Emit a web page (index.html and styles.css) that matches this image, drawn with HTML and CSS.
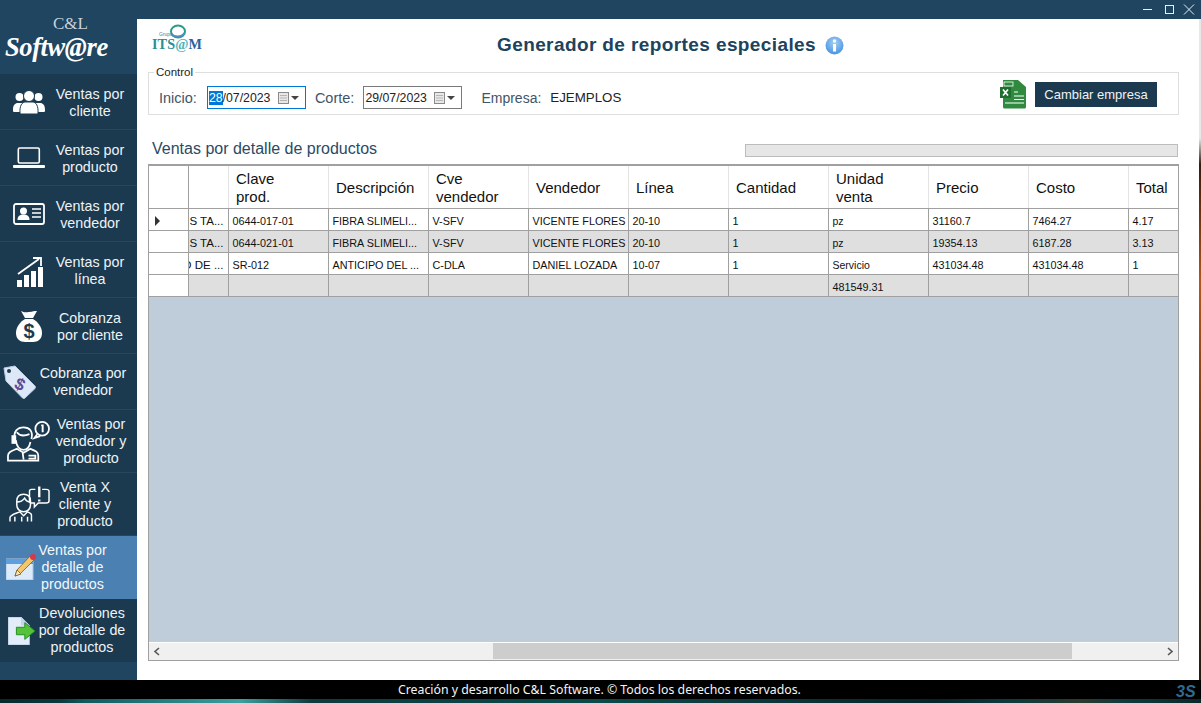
FILE: index.html
```html
<!DOCTYPE html>
<html lang="es">
<head>
<meta charset="utf-8">
<title>Generador de reportes especiales</title>
<link rel="stylesheet" href="styles.css">
</head>
<body>
<div class="window">
  <div class="titlebar">
    <svg class="winctl" width="60" height="14" viewBox="0 0 60 14" fill="none" stroke="#e8eef3" stroke-width="1">
      <path d="M3 6.500h9"/><rect x="25.500" y="2.500" width="8" height="8"/><path d="M44 1.500l10 10M54 1.500l-10 10"/>
    </svg>
  </div>
  <div class="middle">
    <nav class="sidebar">
      <div class="brand">
        <span class="brand-top">C&amp;L</span>
        <span class="brand-main">Softw@re</span>
      </div>
      <a class="item item-a">
        <span class="icon"><svg width="32" height="24" viewBox="0 0 32 24" fill="#fff"><circle cx="6.500" cy="7" r="4"/><circle cx="25.500" cy="7" r="4"/><path d="M0 20c0-5 2-7 5-7h4v9H1.500A1.500 1.500 0 0 1 0 20zM32 20c0-5-2-7-5-7h-4v9h7.500a1.500 1.500 0 0 0 1.500-2z"/><circle cx="16" cy="6" r="5.500" stroke="#1b3a50"/><path d="M7 23c-.500-7 2-11 5-11h8c3 0 5.500 4 5 11a1 1 0 0 1-1 1H8a1 1 0 0 1-1-1z" stroke="#1b3a50"/></svg></span>
        <span class="label">Ventas por cliente</span>
      </a>
      <a class="item item-a">
        <span class="icon"><svg width="32" height="22" viewBox="0 0 32 22" fill="none" stroke="#fff" stroke-width="1.600"><rect x="5.300" y="1" width="21" height="15" rx="1.500"/><path d="M1 19.500h30" stroke-width="2.800" stroke-linecap="round"/></svg></span>
        <span class="label">Ventas por producto</span>
      </a>
      <a class="item item-a">
        <span class="icon"><svg width="32" height="24" viewBox="0 0 32 24"><rect x="1" y="2" width="30" height="20" rx="2" fill="none" stroke="#fff" stroke-width="1.800"/><circle cx="10.500" cy="9" r="3.500" fill="#fff"/><path d="M4.500 18c0-4 2.500-5.500 6-5.500s6 1.500 6 5.500z" fill="#fff"/><path d="M19 7h9M19 11h9M19 15h9" stroke="#fff" stroke-width="1.500"/></svg></span>
        <span class="label">Ventas por vendedor</span>
      </a>
      <a class="item item-a">
        <span class="icon"><svg width="30" height="35" viewBox="-4 -5 30 35" fill="#fff"><rect x="0" y="23" width="5" height="7"/><rect x="7" y="18" width="5" height="12"/><rect x="14" y="14" width="5" height="16"/><rect x="21" y="10" width="5" height="20"/><path d="M1 17L22 2" stroke="#fff" stroke-width="1.800" fill="none"/><path d="M16 1h8v8" fill="none" stroke="#fff" stroke-width="1.800"/></svg></span>
        <span class="label">Ventas por línea</span>
      </a>
      <a class="item item-a">
        <span class="icon"><svg width="29" height="33" viewBox="-3 -2 29 33"><path d="M5 0c3 1.500 4 1.500 8 1s5-1 8-1l-4 7H9z" fill="#fff"/><path d="M9 8h8c5 3 9 8 9 14 0 6-4 9-9 9H9c-5 0-9-3-9-9 0-6 4-11 9-14z" fill="#fff"/><text x="13" y="27" class="bag-sign">$</text></svg></span>
        <span class="label">Cobranza por cliente</span>
      </a>
      <a class="item item-b">
        <span class="icon"><svg width="33" height="34" viewBox="0 0 33 34"><path d="M1 3l11-2 20 20a2 2 0 0 1 0 2.500L22 33a2 2 0 0 1-2.500 0L3 16z" fill="#dce8f7" stroke="#b9cde6"/><circle cx="6" cy="6" r="2" fill="#1b3a50"/><text x="17" y="25" class="tag-sign" transform="rotate(25 17 19)">$</text></svg></span>
        <span class="label">Cobranza por vendedor</span>
      </a>
      <a class="item item-c">
        <span class="icon"><svg width="44" height="42" viewBox="0 0 44 42" fill="none" stroke="#fff" stroke-width="1.800"><path d="M8 20c-2-9 3-13 9-13s10 4 8 12"/><path d="M10 12c3 4 8 4 13 2"/><path d="M9 20c1 7 4 10 8 10s6-3 7-8"/><rect x="5.500" y="16" width="3" height="7" fill="#fff"/><path d="M1 41v-5c0-4 4-5 9-7l7 4 7-4c5 2 8 3 8 7v5z"/><path d="M16 33l1 7M22 36h7v3h-7"/><circle cx="36" cy="8.500" r="7"/><path d="M31 14l-3 4 6-2"/><path d="M35 5h1.500v7" stroke-width="2"/></svg></span>
        <span class="label">Ventas por vendedor y producto</span>
      </a>
      <a class="item item-d">
        <span class="icon"><svg width="42" height="37" viewBox="0 0 42 37" fill="none" stroke="#fff" stroke-width="1.500"><path d="M8 15c0-5 3-7 7-7s7 2 7 7v4c0 4-3 7-7 7s-7-3-7-7z"/><path d="M8 16c3 0 6-1 8-4 1 2 3 4 6 4"/><path d="M1 36v-4c0-3 5-4 10-6l4 4 4-4c5 2 4 3 4 6v4"/><path d="M6 36v-5M19 36v-5M13 31v5"/><path d="M27 3h-4c-2 0-2 1-2 2v10c0 1 0 2 2 2h3v4l4-4h8c2 0 3-1 3-2V5c0-1-1-2-3-2h-4"/><path d="M31 0v11M31 13.500v2" stroke-width="2.400"/></svg></span>
        <span class="label">Venta X cliente y producto</span>
      </a>
      <a class="item item-e active">
        <span class="icon"><svg class="pad" width="30" height="27" viewBox="0 0 30 27"><rect x="0" y="6" width="27" height="21" fill="#dceafa" stroke="#a9c5e6"/><rect x="0" y="6" width="27" height="5" fill="#5f9fe0"/><path d="M9 23l2-6L24 3l4 4-14 14z" fill="#f4c869" stroke="#7a5a2a" stroke-width=".8"/><path d="M9 23l2-6 4 4z" fill="#f8e6c0" stroke="#7a5a2a" stroke-width=".8"/><circle cx="27" cy="4" r="3" fill="#d8384a"/></svg></span>
        <span class="label">Ventas por detalle de productos</span>
      </a>
      <a class="item item-f">
        <span class="icon"><svg width="28" height="28" viewBox="0 0 30 30"><path d="M0 0h14l9 9v21H0z" fill="#e3edfa" stroke="#a6bfdc"/><path d="M14 0v9h9z" fill="#c3d6ee"/><path d="M9 11h9V6l11 9-11 9v-5H9z" fill="#55c23a" stroke="#1f8a1e"/></svg></span>
        <span class="label">Devoluciones por detalle de productos</span>
      </a>
    </nav>
    <main class="content">
      <header class="head">
        <div class="org">
          <svg class="org-ring" width="18" height="15" viewBox="0 0 18 15" fill="none"><ellipse cx="9" cy="7.500" rx="7" ry="6" stroke="#2f9a8c" stroke-width="2"/><path d="M2.500 10c2 3 10 4 13-1" stroke="#4a8fc0" stroke-width="2"/></svg>
          <span class="org-group">Grupo</span>
          <span class="org-name"><span class="org-t">ITS</span><span class="org-at">@</span><span class="org-m">M</span></span>
        </div>
        <h1 class="title">Generador de reportes especiales</h1>
        <svg class="info" width="19" height="19" viewBox="0 0 19 19"><defs><radialGradient id="ig" cx=".5" cy=".35" r=".7"><stop offset="0" stop-color="#a8d0f5"/><stop offset="1" stop-color="#3f8ee0"/></radialGradient></defs><circle cx="9.500" cy="9.500" r="9" fill="url(#ig)"/><circle cx="9.500" cy="5" r="1.700" fill="#fff"/><rect x="8" y="8" width="3" height="7.500" fill="#fff"/></svg>
      </header>
      <fieldset class="control">
        <legend class="legend">Control</legend>
        <span class="field-label">Inicio:</span>
        <span class="date date-focus"><span class="date-text"><span class="sel">28</span>/07/2023</span><span class="cal"><svg width="24" height="14" viewBox="0 0 24 14"><rect x=".5" y="1.500" width="10" height="11" fill="#e8e8e8" stroke="#8a8a8a"/><path d="M2 4.500h7M2 7h7M2 9.500h7" stroke="#b5b5b5"/><path d="M13 5h8l-4 4z" fill="#444"/></svg></span></span>
        <span class="field-label corte">Corte:</span>
        <span class="date"><span class="date-text">29/07/2023</span><span class="cal"><svg width="24" height="14" viewBox="0 0 24 14"><rect x=".5" y="1.500" width="10" height="11" fill="#e8e8e8" stroke="#8a8a8a"/><path d="M2 4.500h7M2 7h7M2 9.500h7" stroke="#b5b5b5"/><path d="M13 5h8l-4 4z" fill="#444"/></svg></span></span>
        <span class="field-label empresa">Empresa:</span>
        <span class="empresa-value">EJEMPLOS</span>
        <svg class="excel" width="27" height="30" viewBox="0 0 27 30"><path d="M3 1h15l8 7v20a1.500 1.500 0 0 1-1.500 1.500H4.500A1.500 1.500 0 0 1 3 28z" fill="#2f8a3f"/><rect x="4" y="3" width="9" height="4" fill="#2f8a3f" stroke="#fff" stroke-width=".8"/><rect x="0" y="8" width="11" height="11" fill="#1f6e30"/><path d="M3 10.500l5 6M8 10.500l-5 6" stroke="#fff" stroke-width="1.700"/><path d="M14 13h4M14 17h10M14 20.500h10M5 24h19" stroke="#fff" stroke-width="1.100"/></svg>
        <button class="change" type="button">Cambiar empresa</button>
      </fieldset>
      <div class="section">
        <h2 class="section-title">Ventas por detalle de productos</h2>
        <div class="progress"></div>
      </div>
      <div class="grid-box">
        <table class="grid">
          <colgroup><col class="c-head"><col class="c-1"><col class="c-n"><col class="c-n"><col class="c-n"><col class="c-n"><col class="c-n"><col class="c-n"><col class="c-n"><col class="c-n"><col class="c-n"><col class="c-t"></colgroup>
          <thead>
            <tr><th class="rowhead"></th><th></th><th>Clave<br>prod.</th><th>Descripción</th><th>Cve<br>vendedor</th><th>Vendedor</th><th>Línea</th><th>Cantidad</th><th>Unidad<br>venta</th><th>Precio</th><th>Costo</th><th>Total</th></tr>
          </thead>
          <tbody>
            <tr><td class="rowhead"><span class="arrow"></span></td><td class="clip"><span>S TA...</span></td><td>0644-017-01</td><td>FIBRA SLIMELI...</td><td>V-SFV</td><td>VICENTE FLORES</td><td>20-10</td><td>1</td><td class="small">pz</td><td>31160.7</td><td>7464.27</td><td>4.17</td></tr>
            <tr class="alt"><td class="rowhead"></td><td class="clip"><span>S TA...</span></td><td>0644-021-01</td><td>FIBRA SLIMELI...</td><td>V-SFV</td><td>VICENTE FLORES</td><td>20-10</td><td>1</td><td class="small">pz</td><td>19354.13</td><td>6187.28</td><td>3.13</td></tr>
            <tr><td class="rowhead"></td><td class="clip"><span>O DE ...</span></td><td>SR-012</td><td>ANTICIPO DEL ...</td><td>C-DLA</td><td>DANIEL LOZADA</td><td>10-07</td><td>1</td><td class="small">Servicio</td><td>431034.48</td><td>431034.48</td><td>1</td></tr>
            <tr class="alt"><td class="rowhead"></td><td></td><td></td><td></td><td></td><td></td><td></td><td></td><td>481549.31</td><td></td><td></td><td></td></tr>
          </tbody>
        </table>
        <div class="grid-empty"></div>
        <div class="hscroll">
          <svg width="7" height="9" viewBox="0 0 7 9" fill="none" stroke="#555" stroke-width="1.600"><path d="M6 1L2 4.500 6 8"/></svg>
          <div class="track"><div class="thumb"></div></div>
          <svg width="7" height="9" viewBox="0 0 7 9" fill="none" stroke="#555" stroke-width="1.600"><path d="M1 1l4 3.500L1 8"/></svg>
        </div>
      </div>
    </main>
    <div class="desktop-edge"></div>
  </div>
  <footer class="footer">
    <div class="footer-bar">
      <span class="footer-text">Creación y desarrollo C&amp;L Software. © Todos los derechos reservados.</span>
      <span class="footer-mark">3S</span>
    </div>
    <div class="footer-strip"></div>
  </footer>
</div>
</body>
</html>
```

FILE: styles.css
```css
* { box-sizing: border-box; }
html, body { margin: 0; padding: 0; }
body { width: 1201px; height: 703px; overflow: hidden; font-family: "Liberation Sans", Arial, sans-serif; background: #000; }
.window { width: 1201px; height: 703px; display: flex; flex-direction: column; }

.titlebar { height: 19px; flex: none; background: #1f4560; display: flex; justify-content: flex-end; align-items: center; }
.winctl { margin-right: 1px; }

.middle { height: 661px; flex: none; display: flex; }

.sidebar { width: 137px; flex: none; background: #1f4560; display: flex; flex-direction: column; margin-top: -19px; height: 680px; }
.brand { height: 74px; flex: none; position: relative; color: #fff; }
.brand-top { position: absolute; left: 53px; top: 15px; font: 17px/17px "Liberation Serif", serif; color: #c8d2da; }
.brand-main { position: absolute; left: 5px; top: 34px; font: italic bold 26.500px/26px "Liberation Serif", serif; letter-spacing: -.4px; color: #fff; }

.item { height: 56px; flex: none; display: flex; align-items: center; background: #1b3a50; border-bottom: 1px solid #27475e; color: #eef3f7; font-size: 14.3px; line-height: 17px; text-align: center; }
.icon { display: flex; justify-content: flex-start; align-items: center; flex: none; }
.label { display: block; flex: none; }
.item-a .icon { width: 48px; padding-left: 13px; }
.item-a .label { width: 84px; padding-top: 2px; }
.item-b .icon { width: 38px; padding-left: 3px; }
.item-b .label { width: 90px; }
.item-c { height: 63px; }
.item-c .icon { width: 50px; padding-left: 7px; }
.item-c .label { width: 82px; }
.item-d { height: 63px; }
.item-d .icon { width: 50px; padding-left: 9px; }
.item-d .label { width: 70px; }
.item-e { height: 63px; }
.item-e .icon { width: 38px; padding-left: 6px; }
.item-e .label { width: 69px; }
.item-f { height: 63px; border-bottom: 0; }
.item-f .icon { width: 38px; padding-left: 8px; }
.item-f .label { width: 88px; }
.active { background: #4a80b2; border-bottom: 0; color: #f4f7fa; }
.pad { margin-top: -2px; }
.bag-sign { font: bold 20px "Liberation Sans", sans-serif; fill: #1b3a50; text-anchor: middle; }
.tag-sign { font: bold 17px "Liberation Sans", sans-serif; fill: #5b4a96; text-anchor: middle; }

.content { width: 1062px; flex: none; background: #fff; padding: 0 11px; display: flex; flex-direction: column; }
.desktop-edge { width: 2px; flex: none; background: linear-gradient(#e8e8e8 0, #e8e8e8 18%, #3a1a10 22%, #b8551c 40%, #5a3018 70%, #2a1a12 100%); }

.head { height: 47px; flex: none; display: flex; align-items: center; padding-top: 5px; }
.org { width: 349px; flex: none; align-self: flex-start; position: relative; height: 34px; }
.org-ring { position: absolute; left: 21px; top: 0; }
.org-group { position: absolute; left: 11px; top: 7px; font-size: 5px; line-height: 6px; color: #5a7a8a; }
.org-name { position: absolute; left: 4px; top: 13px; font: bold 14.200px/14px "Liberation Serif", serif; letter-spacing: .1px; }
.org-t { color: #2a8f92; }
.org-at { color: #4fb3b8; }
.org-m { color: #2f5f9c; }
.title { margin: 0; font-size: 19px; line-height: 26px; font-weight: bold; color: #20435c; letter-spacing: .4px; white-space: nowrap; }
.info { margin-left: 9px; flex: none; }

.control { margin: 0; padding: 8px 0 0 10px; height: 49px; width: 1031px; flex: none; border: 1px solid #dedede; display: flex; align-items: center; min-width: 0; }
.legend { font-size: 11.500px; line-height: 12px; padding: 0 2px; margin-left: -5px; color: #222; }
.field-label { font-size: 14.500px; color: #3e5568; }
.date { width: 99px; height: 23px; display: flex; align-items: center; justify-content: space-between; margin-left: 8px; border: 1px solid #7a7a7a; padding: 1px 3px 0 1px; font-size: 12.300px; color: #222; background: #fff; }
.date-focus { border-color: #0078d7; margin-left: 10px; }
.date-text { white-space: nowrap; }
.sel { background: #0078d7; color: #fff; }
.cal { display: flex; width: 24px; }
.corte { margin-left: 9px; margin-right: 1px; }
.empresa { margin-left: 19px; font-size: 14px; }
.empresa-value { margin-left: 9px; font-size: 13.300px; color: #222; }
.excel { margin-left: auto; flex: none; margin-top: -7px; }
.change { margin-left: 8px; margin-right: 21px; margin-top: -6px; width: 122px; height: 25px; border: 0; padding: 0; background: #1b3a50; color: #eef3f7; font: 13px "Liberation Sans", sans-serif; }

.section { height: 49px; flex: none; display: flex; align-items: flex-end; justify-content: space-between; padding-bottom: 6px; width: 1030px; }
.section-title { margin: 0 0 0 4px; font-size: 16px; line-height: 18px; font-weight: normal; color: #2b4a64; }
.progress { width: 433px; height: 13px; background: #e6e6e6; border: 1px solid #bcbcbc; align-self: flex-end; position: relative; top: -1px; }

.grid-box { width: 1031px; height: 497px; flex: none; border: 1px solid #a0a0a0; border-top: 2px solid #a0a0a0; display: flex; flex-direction: column; background: #bfcddb; overflow: hidden; }
.grid { border-collapse: collapse; table-layout: fixed; width: 1029px; flex: none; background: #fff; }
.c-head { width: 39px; }
.c-1 { width: 40px; }
.c-n { width: 100px; }
.c-t { width: 50px; }
.grid th { height: 42px; padding: 2px 7px 0 7.500px; font-size: 15px; line-height: 18px; font-weight: normal; text-align: left; color: #111; background: #fff; border-right: 1px solid #e4e4e4; border-bottom: 1px solid #a0a0a0; }
.grid th:last-child { border-right: 0; }
.grid td { height: 22px; padding: 3px 3px 0 4px; font-size: 10.800px; color: #111; border-right: 1px solid #a0a0a0; border-bottom: 1px solid #a0a0a0; white-space: nowrap; overflow: hidden; }
.grid td:last-child { border-right: 0; }
.grid td.small { font-size: 10.500px; }
.grid .rowhead { background: #fff; border-right: 1px solid #a0a0a0; padding-left: 3px; }
.alt td { background: #dfdfdf; }
.grid td.clip { padding: 3px 4px 0 0; direction: rtl; text-align: right; }
.clip span { direction: ltr; unicode-bidi: bidi-override; display: inline-block; font-size: 11.500px; }
.arrow { display: block; margin-left: 3px; width: 0; height: 0; border-left: 5px solid #333; border-top: 5px solid transparent; border-bottom: 5px solid transparent; }

.grid-empty { flex: 1; background: #bfcddb; }
.hscroll { height: 18px; flex: none; border-top: 1px solid #fff; background: #f0f0f0; display: flex; align-items: center; padding: 0 4px; }
.track { flex: 1; height: 17px; padding-left: 333px; padding-right: 95px; }
.thumb { width: 579px; height: 16px; background: #cdcdcd; }

.footer { height: 23px; flex: none; display: flex; flex-direction: column; background: #000; }
.footer-bar { height: 19px; flex: none; display: flex; align-items: center; padding-left: 398px; position: relative; }
.footer-text { font: 12.300px/18px "Noto Sans", sans-serif; color: #f4f4f4; white-space: nowrap; }
.footer-mark { position: absolute; left: 1176px; top: 3px; font: italic bold 16px/18px "Liberation Sans", sans-serif; color: #2f6a94; }
.footer-strip { height: 4px; flex: none; background: linear-gradient(90deg, #052a2e 0, #0a3a3e 5%, #0f5a5e 7%, #3aa0a0 20%, #0f3a3e 26%, #0a4a4a 50%, #0f3a3e 60%, #05252a 78%, #0d3a3e 84%, #2a3a30 90%, #0d3a3e 94%, #0a2a2a 100%); }
```
